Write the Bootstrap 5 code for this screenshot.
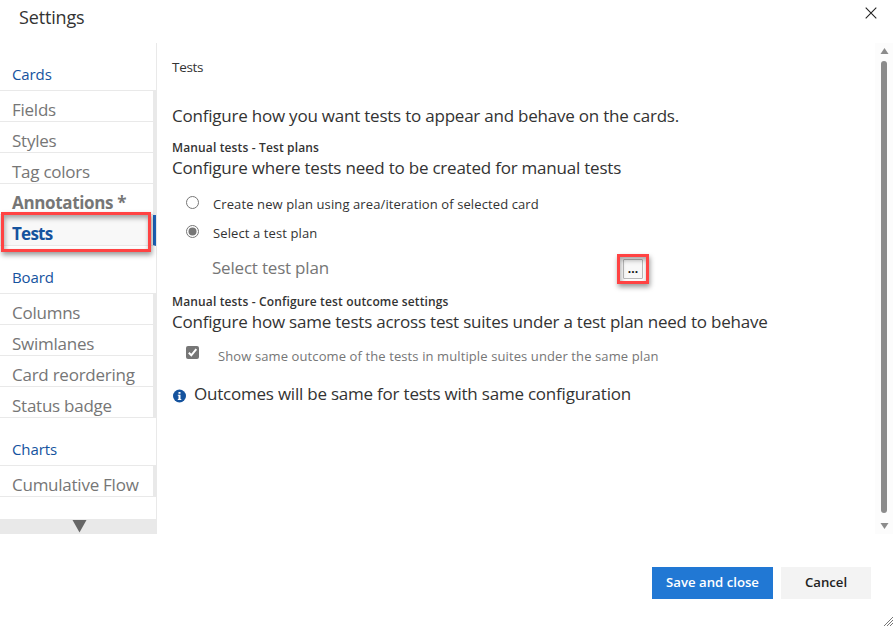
<!DOCTYPE html>
<html lang="en">
<head>
<meta charset="utf-8">
<meta name="viewport" content="width=device-width, initial-scale=1">
<title>Settings</title>
<link href="https://cdn.jsdelivr.net/npm/bootstrap@5.3.0/dist/css/bootstrap.min.css" rel="stylesheet">
<style>
body{font-family:"Open Sans","Noto Sans",sans-serif;color:#333;background:#fff;font-size:13px}
.dialog{width:893px;height:626px}
.dlg-head{height:43px;padding:0 16px 0 19px}
.dlg-title{font-size:18px;line-height:34px;letter-spacing:-.15px}
.dlg-close{margin-top:7px}
.dlg-body{height:491px}
.side{width:157px;border-right:1px solid #e9e9e9}
.side-head{height:48px;padding:17px 0 0 12px;border-bottom:1px solid #e9e9e9;font-size:15px;line-height:28px;letter-spacing:-.1px;color:#15539e}
.side-item{height:31px;padding:4px 0 0 12px;border:0 solid #e9e9e9;border-width:0 3px 1px 0;font-size:17px;line-height:30px;letter-spacing:-.25px;color:#767676}
.side-item.changed{font-weight:700;letter-spacing:-.35px}
.side-item.current{border-right-color:#1c62b9;background:#f8f8f8;color:#15539e;font-weight:700;letter-spacing:-.75px}
.side-more{height:15px;padding-left:3px;background:#e9e9e9}
.mark-red{border:3px solid #ff4343;box-shadow:1px 3px 5px rgba(0,0,0,.4),inset 1px 3px 5px rgba(0,0,0,.35)}
.mark-nav{left:1px;top:-3px;width:150px;height:40px}
.mark-btn{left:-7px;top:-6px;width:32px;height:30px}
.content{padding:14px 0 0 15px}
.t-tab{height:47px;font-size:13.5px;line-height:20px;letter-spacing:-.3px}
.t-lg{font-size:17px;line-height:24px;letter-spacing:-.22px}
.t-intro{height:34px}
.t-sub{height:18px;font-size:12px;line-height:20px;letter-spacing:.14px;font-weight:600}
.opts{padding:15px 0 0 14px}
.opt{height:29px;letter-spacing:.105px}
.opt svg{margin-top:1px}
.opt-gap{gap:14px}
.plan{height:39px;padding-left:40px;color:#767676;font-size:17px;line-height:30px;letter-spacing:-.2px}
.plan-name{width:411px}
.pick{width:20px;height:20px;margin-top:6px;border:1px solid #bbb;border-radius:1px;background:#f8f8f8;color:#111;font-size:12px;line-height:17px;font-weight:700;letter-spacing:0}
.same-row{padding:12px 0 0 14px;height:48px;gap:19px;color:#767676;letter-spacing:.105px;line-height:20px}
.info-row{gap:8px}
.info-row svg{margin-top:3px}
.scroll-track{width:18px;padding:5px 0 5px;background:#fcfcfc}
.scroll-thumb{width:6px;border-radius:3px;background:#8b8b8b;margin:7px 0 10px}
.foot{padding:33px 22px 0 0}
.act{height:32px;border:0;border-radius:0;font-size:13.2px;font-weight:600;padding:0}
.act-save,.act-save:hover{width:121px;background:#2178d4;color:#fff}
.act-cancel,.act-cancel:hover{width:90px;background:#f3f3f3;color:#222}
.grip{right:0;bottom:0}
</style>
</head>
<body>
<div class="dialog d-flex flex-column position-relative overflow-hidden">
  <header class="dlg-head d-flex justify-content-between align-items-start">
    <span class="dlg-title">Settings</span>
    <svg class="dlg-close" width="12" height="12" viewBox="0 0 12 12" stroke="#222" stroke-width="1.100" fill="none"><path d="M.7.7l10.6 10.600M11.300.7L.7 11.300"/></svg>
  </header>
  <main class="dlg-body d-flex">
    <nav class="side d-flex flex-column flex-shrink-0">
      <div class="side-head">Cards</div>
      <div class="side-item">Fields</div>
      <div class="side-item">Styles</div>
      <div class="side-item">Tag colors</div>
      <div class="side-item changed">Annotations *</div>
      <div class="side-item current position-relative">Tests<div class="mark-red mark-nav position-absolute"></div></div>
      <div class="side-head">Board</div>
      <div class="side-item">Columns</div>
      <div class="side-item">Swimlanes</div>
      <div class="side-item">Card reordering</div>
      <div class="side-item">Status badge</div>
      <div class="side-head">Charts</div>
      <div class="side-item">Cumulative Flow</div>
      <div class="side-more mt-auto d-flex justify-content-center"><svg width="15" height="14" viewBox="0 0 15 14"><path d="M.5 1h14L7.500 13.500z" fill="#666"/></svg></div>
    </nav>
    <section class="content flex-grow-1">
      <div class="t-tab">Tests</div>
      <div class="t-lg t-intro">Configure how you want tests to appear and behave on the cards.</div>
      <div class="t-sub">Manual tests - Test plans</div>
      <div class="t-lg">Configure where tests need to be created for manual tests</div>
      <div class="opts">
        <div class="opt opt-gap d-flex align-items-start">
          <svg class="flex-shrink-0" width="13" height="13" viewBox="0 0 13 13"><circle cx="6.500" cy="6.500" r="6" fill="#fff" stroke="#767676"/></svg>
          <span>Create new plan using area/iteration of selected card</span>
        </div>
        <div class="opt opt-gap d-flex align-items-start">
          <svg class="flex-shrink-0" width="13" height="13" viewBox="0 0 13 13"><circle cx="6.500" cy="6.500" r="6" fill="#fff" stroke="#767676"/><circle cx="6.500" cy="6.500" r="4" fill="#767676"/></svg>
          <span>Select a test plan</span>
        </div>
      </div>
      <div class="plan d-flex align-items-start">
        <span class="plan-name">Select test plan</span>
        <div class="pick position-relative text-center">...<div class="mark-red mark-btn position-absolute"></div></div>
      </div>
      <div class="t-sub">Manual tests - Configure test outcome settings</div>
      <div class="t-lg">Configure how same tests across test suites under a test plan need to behave</div>
      <div class="same-row d-flex align-items-start">
        <svg class="flex-shrink-0" width="13" height="13" viewBox="0 0 13 13"><rect width="13" height="13" rx="2" fill="#767676"/><path d="M2.800 6.800l2.500 2.500 5-6.200" fill="none" stroke="#fff" stroke-width="2"/></svg>
        <span>Show same outcome of the tests in multiple suites under the same plan</span>
      </div>
      <div class="info-row d-flex align-items-center">
        <svg width="14" height="14" viewBox="0 0 14 14"><circle cx="7.500" cy="7" r="6.500" fill="#15539e"/><path d="M6.500 3h2v1.700h-2zM5.800 5.800h2.700v4.200h.8v1H5.800v-1h.7V6.800h-.7z" fill="#fff"/></svg>
        <span class="t-lg">Outcomes will be same for tests with same configuration</span>
      </div>
    </section>
    <div class="scroll-track d-flex flex-column align-items-center">
      <svg width="9" height="6" viewBox="0 0 9 6"><path d="M4.500 0L8.500 6h-8z" fill="#8b8b8b"/></svg>
      <div class="scroll-thumb flex-grow-1"></div>
      <svg width="9" height="6" viewBox="0 0 9 6"><path d="M.5 0h8L4.500 6z" fill="#8b8b8b"/></svg>
    </div>
  </main>
  <footer class="foot d-flex justify-content-end gap-2">
    <button class="btn act act-save">Save and close</button>
    <button class="btn act act-cancel">Cancel</button>
  </footer>
  <svg class="grip position-absolute" width="9" height="9" viewBox="0 0 9 9" stroke="#777" fill="none"><path d="M0 9L9 0M3 9l6-6M6 9l3-3"/></svg>
</div>
<script src="https://cdn.jsdelivr.net/npm/bootstrap@5.3.0/dist/js/bootstrap.bundle.min.js"></script>
</body>
</html>
